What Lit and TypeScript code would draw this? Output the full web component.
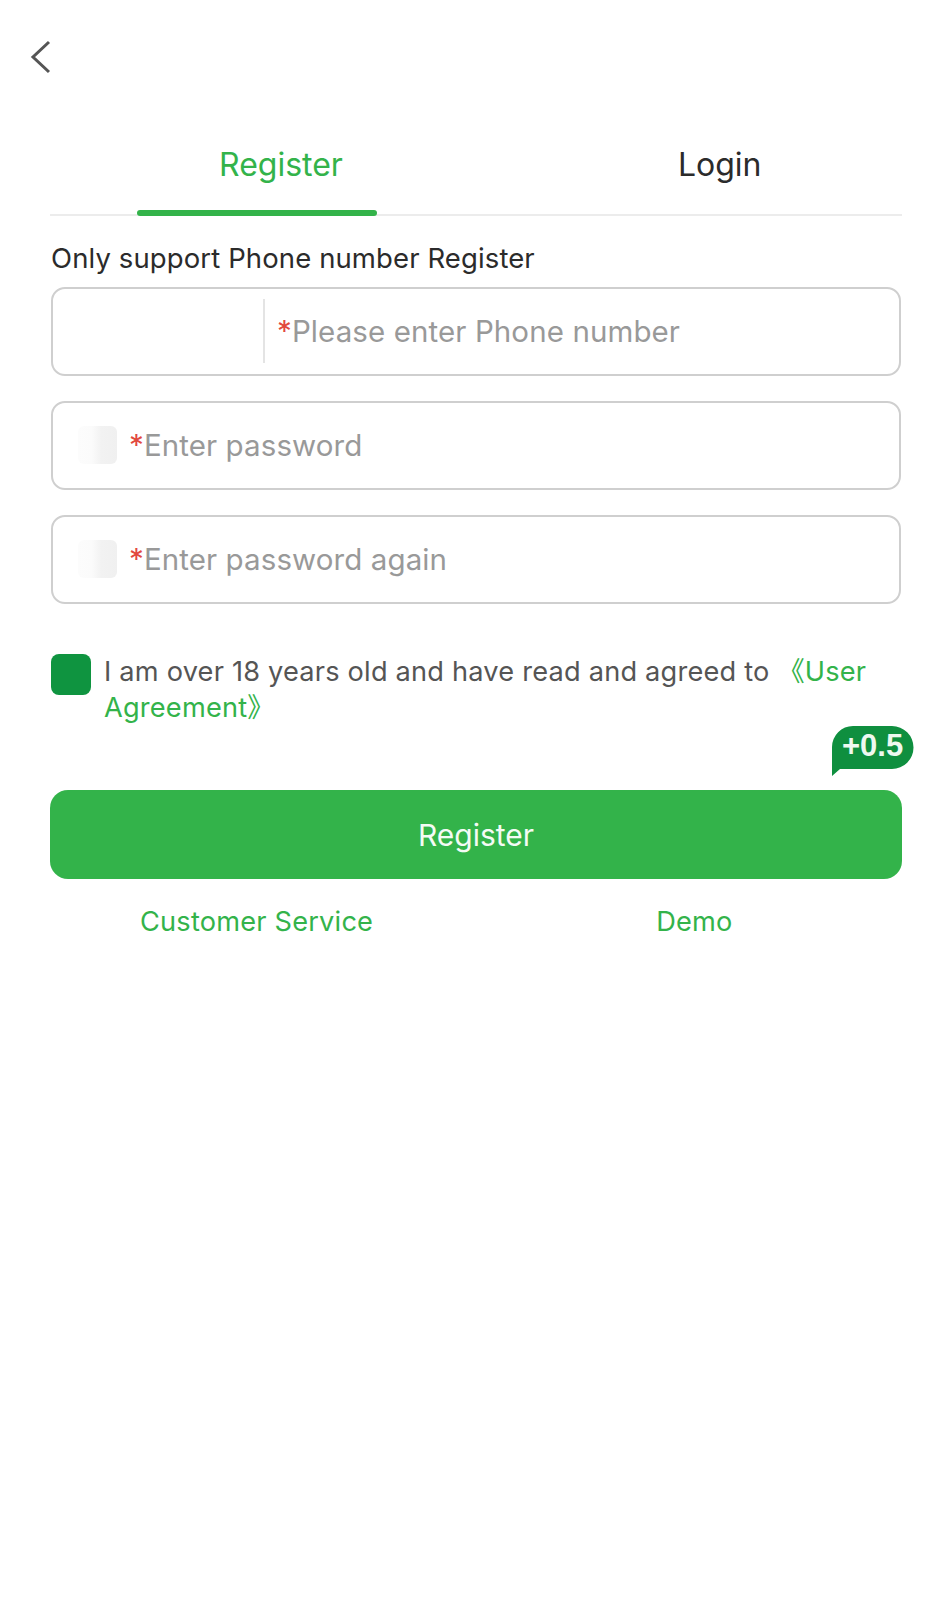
import { LitElement, html, css } from 'lit';
import { customElement } from 'lit/decorators.js';

@customElement('app-root')
export class AppRoot extends LitElement {
  static styles = css`
    :host {
      display: block;
      width: 952px;
      min-height: 1600px;
      background: #fff;
      font-family: Inter, 'Liberation Sans', 'Noto Sans CJK SC', sans-serif;
      color: #2b2b2b;
    }

    .top {
      height: 128px;
      padding: 40px 0 0 30px;
      box-sizing: border-box;
    }

    .back {
      display: block;
      width: 22px;
      height: 34px;
    }

    .page {
      padding: 0 50px;
    }

    .tabs {
      position: relative;
      display: flex;
      height: 88px;
      border-bottom: 2px solid #ececec;
      box-sizing: border-box;
      font-size: 32px;
      line-height: 38px;
    }

    .tab {
      padding-top: 18px;
    }

    .tab.register {
      margin-left: 169px;
      color: #33b34a;
    }

    .tab.login {
      margin-left: 335px;
      color: #2b2b2b;
    }

    .indicator {
      position: absolute;
      left: 87px;
      bottom: -2px;
      width: 240px;
      height: 6px;
      border-radius: 3px;
      background: #33b34a;
    }

    .hint {
      margin: 24px 0 0 1px;
      font-size: 27.5px;
      line-height: 36px;
      letter-spacing: 0.11px;
    }

    .fields {
      display: flex;
      flex-direction: column;
      gap: 25px;
      margin: 11px 0 0 1px;
      width: 850px;
    }

    .field {
      display: flex;
      align-items: center;
      height: 89px;
      padding-bottom: 2px;
      box-sizing: border-box;
      border: 2.5px solid #cfcfcf;
      border-radius: 14px;
      font-size: 29.5px;
      letter-spacing: 0.1px;
      color: #999;
    }

    .prefix {
      width: 212px;
      height: 64px;
      border-right: 2px solid #e4e4e4;
      margin-right: 12px;
      box-sizing: border-box;
    }

    .blurred {
      width: 39px;
      height: 38px;
      margin: 0 12px 0 25px;
      border-radius: 6px;
      background: linear-gradient(90deg, #fcfcfc 0%, #fbfbfb 35%, #f2f2f2 60%, #f0f0f0 100%);
    }

    .star {
      color: #e2483f;
    }

    .agree {
      display: flex;
      align-items: flex-start;
      gap: 13px;
      margin-top: 50px;
      font-size: 27.2px;
      line-height: 36px;
      letter-spacing: 0.2px;
      color: #555;
    }

    .check {
      flex: none;
      width: 40px;
      height: 41px;
      margin-left: 1px;
      border-radius: 8px;
      background: #0f9440;
    }

    .agree p {
      margin: 0;
      width: 780px;
    }

    .agree a {
      color: #33b34a;
    }

    .submit-wrap {
      position: relative;
      margin-top: 64px;
    }

    .submit {
      display: flex;
      align-items: center;
      justify-content: center;
      height: 89px;
      border-radius: 18px;
      background: #33b34a;
      color: #f4fbf5;
      font-size: 30px;
    }

    .badge {
      position: absolute;
      left: 782px;
      top: -64px;
      width: 82px;
      height: 50px;
    }

    .badge svg {
      position: absolute;
      inset: 0;
    }

    .badge span {
      position: absolute;
      left: 10px;
      top: 2px;
      font-family: 'Liberation Sans', sans-serif;
      font-size: 31px;
      line-height: 36px;
      font-weight: 700;
      color: #eef9f0;
    }

    .links {
      display: flex;
      margin-top: 25px;
      font-size: 27.2px;
      line-height: 36px;
      letter-spacing: 0.2px;
      color: #33b34a;
    }

    .links .service {
      margin-left: 90px;
    }

    .links .demo {
      margin-left: 283px;
    }
  `;

  render() {
    return html`
      <div class="top">
        <svg class="back" viewBox="0 0 22 34" fill="none">
          <path d="M19 2 L3 17 L19 32" stroke="#555" stroke-width="3" />
        </svg>
      </div>
      <div class="page">
        <div class="tabs">
          <div class="tab register">Register</div>
          <div class="tab login">Login</div>
          <div class="indicator"></div>
        </div>
        <div class="hint">Only support Phone number Register</div>
        <div class="fields">
          <div class="field">
            <div class="prefix"></div>
            <span class="star">*</span><span>Please enter Phone number</span>
          </div>
          <div class="field">
            <div class="blurred"></div>
            <span class="star">*</span><span>Enter password</span>
          </div>
          <div class="field">
            <div class="blurred"></div>
            <span class="star">*</span><span>Enter password again</span>
          </div>
        </div>
        <div class="agree">
          <div class="check"></div>
          <p>I am over 18 years old and have read and agreed to <a>《User</a> <a>Agreement》</a></p>
        </div>
        <div class="submit-wrap">
          <div class="badge">
            <svg width="82" height="50" viewBox="0 0 82 50">
              <path d="M0 50 V21 A21 21 0 0 1 21 0 H60 A21 21 0 0 1 60 43 H8 Z" fill="#0f8f3f" />
            </svg>
            <span>+0.5</span>
          </div>
          <div class="submit">Register</div>
        </div>
        <div class="links">
          <span class="service">Customer Service</span>
          <span class="demo">Demo</span>
        </div>
      </div>
    `;
  }
}
